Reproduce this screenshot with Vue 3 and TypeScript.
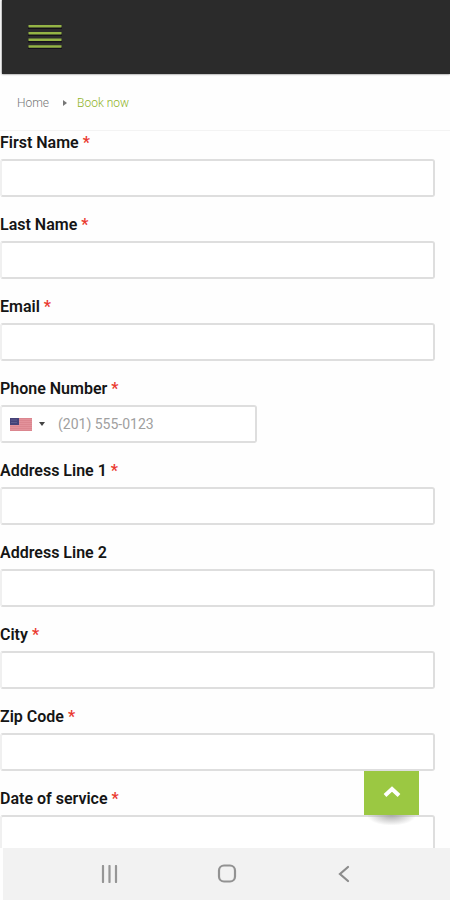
<script setup lang="ts">
import { ref } from 'vue'

interface Field {
  id: string
  label: string
  required: boolean
  type: 'text' | 'email' | 'tel'
}

const fields: Field[] = [
  { id: 'first-name', label: 'First Name', required: true, type: 'text' },
  { id: 'last-name', label: 'Last Name', required: true, type: 'text' },
  { id: 'email', label: 'Email', required: true, type: 'email' },
  { id: 'phone', label: 'Phone Number', required: true, type: 'tel' },
  { id: 'address-1', label: 'Address Line 1', required: true, type: 'text' },
  { id: 'address-2', label: 'Address Line 2', required: false, type: 'text' },
  { id: 'city', label: 'City', required: true, type: 'text' },
  { id: 'zip', label: 'Zip Code', required: true, type: 'text' },
  { id: 'service-date', label: 'Date of service', required: true, type: 'text' },
]

const values = ref<Record<string, string>>({})
const page = ref<HTMLElement | null>(null)

function scrollToTop(): void {
  page.value?.scrollTo({ top: 0, behavior: 'smooth' })
}
</script>

<template>
  <div class="screen">
    <div ref="page" class="page">
      <header class="header">
        <button type="button" class="menu" aria-label="Menu">
          <svg width="34" height="26" viewBox="0 0 34 26">
            <path d="M0 4h34M0 11h34M0 17.500h34M0 24h34" stroke="#15101c" stroke-width="2" />
            <path d="M0.500 2.300h33M0.500 9.200h33M0.500 15.800h33M0.500 22.500h33" stroke="#94b345" stroke-width="2.600" />
          </svg>
        </button>
      </header>

      <nav class="breadcrumb">
        <a href="#">Home</a>
        <svg width="4" height="6" viewBox="0 0 4 6"><path d="M0 0l4 3-4 3z" fill="#777" /></svg>
        <a href="#" class="current">Book now</a>
      </nav>

      <form class="form" @submit.prevent>
        <div v-for="field in fields" :key="field.id" class="field">
          <label :for="field.id">{{ field.label }} <span v-if="field.required" class="star">*</span></label>
          <div v-if="field.type === 'tel'" class="box phone">
            <button type="button" class="country" aria-label="Country code">
              <svg width="22" height="13" viewBox="0 0 22 13">
                <rect width="22" height="13" fill="#e3929b" />
                <path d="M0 .5h22M0 2.500h22M0 4.500h22M0 6.500h22M0 8.500h22M0 10.500h22M0 12.500h22" stroke="#db868f" stroke-width="1" />
                <rect width="9" height="7" fill="#454278" />
                <path d="M1.500 2h6M1.500 4.500h6" stroke="#77739f" stroke-width="1" stroke-dasharray="1 1" />
              </svg>
              <svg width="6" height="4" viewBox="0 0 6 4"><path d="M0 0h6L3 4z" fill="#444" /></svg>
            </button>
            <input :id="field.id" v-model="values[field.id]" type="tel" placeholder="(201) 555-0123" />
          </div>
          <input v-else :id="field.id" v-model="values[field.id]" class="box" :type="field.type" />
        </div>
      </form>
    </div>

    <button type="button" class="to-top" aria-label="Back to top" @click="scrollToTop">
      <svg width="18" height="14" viewBox="0 0 18 14">
        <path d="M2 9.500L9 3l7 6.500" fill="none" stroke="#fff" stroke-width="4" />
      </svg>
    </button>

    <nav class="system">
      <button type="button" aria-label="Recent apps">
        <svg width="18" height="18" viewBox="0 0 18 18">
          <path d="M3 1v16M9.500 1v16M16 1v16" stroke="#969696" stroke-width="2.200" stroke-linecap="round" />
        </svg>
      </button>
      <button type="button" aria-label="Home screen">
        <svg width="20" height="20" viewBox="0 0 20 20">
          <rect x="2" y="1.500" width="16" height="16" rx="5" fill="none" stroke="#929292" stroke-width="2.200" />
        </svg>
      </button>
      <button type="button" aria-label="Back">
        <svg width="18" height="18" viewBox="0 0 18 18">
          <path d="M13 2L5 9l8 7" fill="none" stroke="#8c8c8c" stroke-width="2.200" stroke-linecap="round" />
        </svg>
      </button>
    </nav>
  </div>
</template>

<style>
body {
  margin: 0;
  background: #fefefe;
}
</style>

<style scoped>
.screen {
  position: relative;
  display: flex;
  flex-direction: column;
  height: 100vh;
  font-family: Roboto, "Liberation Sans", sans-serif;
}

button {
  padding: 0;
  border: 0;
  background: none;
}

svg {
  display: block;
}

.page {
  flex: 1;
  min-height: 0;
  overflow-y: auto;
  scrollbar-width: none;
}

.header {
  display: flex;
  align-items: center;
  height: 74px;
  margin-left: 2px;
  padding: 0 26px;
  box-sizing: border-box;
  background: #2b2b2b;
  box-shadow: 0 0 2px #555;
}

.breadcrumb {
  display: flex;
  align-items: center;
  height: 57px;
  padding: 2px 17px 0;
  box-sizing: border-box;
  border-bottom: 1px solid #f3f3f3;
  font-size: 12px;
  font-weight: 300;
}

.breadcrumb svg {
  margin: 0 10px 0 14px;
}

.breadcrumb a {
  color: #777;
  text-decoration: none;
}

.breadcrumb .current {
  color: #8fb31f;
}

.field {
  display: flex;
  flex-direction: column;
  gap: 4px;
  margin: 0 15px 16px 0;
}

label {
  color: #151515;
  font-size: 16px;
  font-weight: 600;
  line-height: 24px;
}

.star {
  color: #ea3a30;
}

.box {
  width: 100%;
  height: 38px;
  padding: 0 10px;
  box-sizing: border-box;
  border: 2px solid #dedede;
  border-left-color: #f0f0f0;
  border-radius: 3px;
  background: #fff;
  font: inherit;
  font-size: 14px;
}

.phone {
  display: flex;
  align-items: center;
  width: 257px;
  padding: 0 8px;
}

.country {
  display: flex;
  flex: none;
  align-items: center;
  gap: 7px;
}

.phone input {
  flex: 1;
  min-width: 0;
  padding: 0 0 0 13px;
  border: 0;
  background: none;
  font: inherit;
}

.phone input::placeholder {
  color: #a0a0a0;
}

.to-top {
  position: absolute;
  right: 31px;
  bottom: 85px;
  display: flex;
  align-items: center;
  justify-content: center;
  width: 55px;
  height: 44px;
  background: #9bc842;
}

.to-top::after {
  content: "";
  position: absolute;
  top: 100%;
  left: 4px;
  right: 4px;
  height: 10px;
  background: radial-gradient(ellipse at top, #aaa, transparent 75%);
}

.system {
  display: flex;
  flex: none;
  align-items: center;
  justify-content: space-between;
  height: 52px;
  margin-left: 3px;
  padding: 0 97px;
  background: #f2f2f2;
}
</style>
